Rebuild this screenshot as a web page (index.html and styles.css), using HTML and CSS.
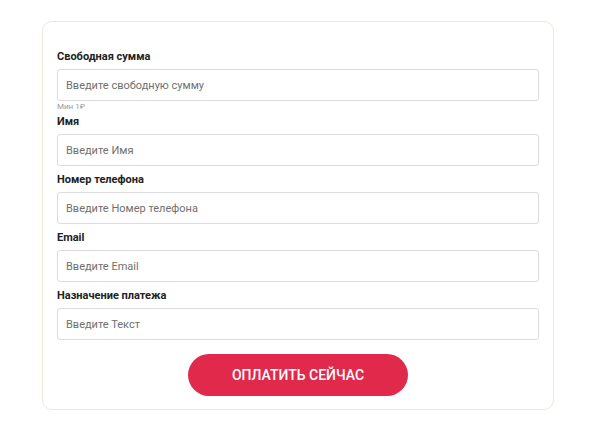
FILE: index.html
```html
<!DOCTYPE html>
<html lang="ru">
<head>
<meta charset="utf-8">
<title>Оплата</title>
<link rel="stylesheet" href="styles.css">
</head>
<body>
<form class="card">
  <div class="field">
    <label class="label">Свободная сумма</label>
    <input class="input" type="text" placeholder="Введите свободную сумму">
    <div class="hint">Мин 1₽</div>
  </div>
  <div class="field">
    <label class="label">Имя</label>
    <input class="input" type="text" placeholder="Введите Имя">
  </div>
  <div class="field">
    <label class="label">Номер телефона</label>
    <input class="input" type="text" placeholder="Введите Номер телефона">
  </div>
  <div class="field">
    <label class="label">Email</label>
    <input class="input" type="text" placeholder="Введите Email">
  </div>
  <div class="field">
    <label class="label">Назначение платежа</label>
    <input class="input" type="text" placeholder="Введите Текст">
  </div>
  <div class="actions">
    <button class="pay" type="button">ОПЛАТИТЬ СЕЙЧАС</button>
  </div>
</form>
</body>
</html>
```

FILE: styles.css
```css
* { box-sizing: border-box; }
html, body { margin: 0; padding: 0; background: #ffffff; }
body {
  font-family: Roboto, "Liberation Sans", Arial, sans-serif;
  padding: 21px 0 0 42px;
}
.card {
  width: 512px;
  border: 1px solid #f5e4d8;
  border-radius: 10px;
  padding: 28px 14px 13px;
  display: flex;
  flex-direction: column;
  gap: 7px;
  background: #fff;
}
.field {
  display: flex;
  flex-direction: column;
}
.label {
  font-size: 11px;
  line-height: 14px;
  font-weight: 700;
  color: #222;
  margin-bottom: 5px;
}
.input {
  height: 32px;
  width: 100%;
  border: 1px solid #dcdcdc;
  border-radius: 3px;
  padding: 0 8px;
  font-family: inherit;
  font-size: 11px;
  color: #333;
  outline: none;
  background: #fff;
}
.input::placeholder { color: #6f6f6f; opacity: 1; }
.hint {
  font-size: 8px;
  line-height: 7px;
  padding-top: 2px;
  color: #999;
  height: 7px;
}
.actions {
  display: flex;
  justify-content: center;
  padding-top: 7px;
}
.pay {
  width: 220px;
  height: 42px;
  border: none;
  border-radius: 21px;
  background: #e0294b;
  color: #fff;
  font-family: inherit;
  font-size: 14px;
  font-weight: 500;
  cursor: pointer;
}
```
